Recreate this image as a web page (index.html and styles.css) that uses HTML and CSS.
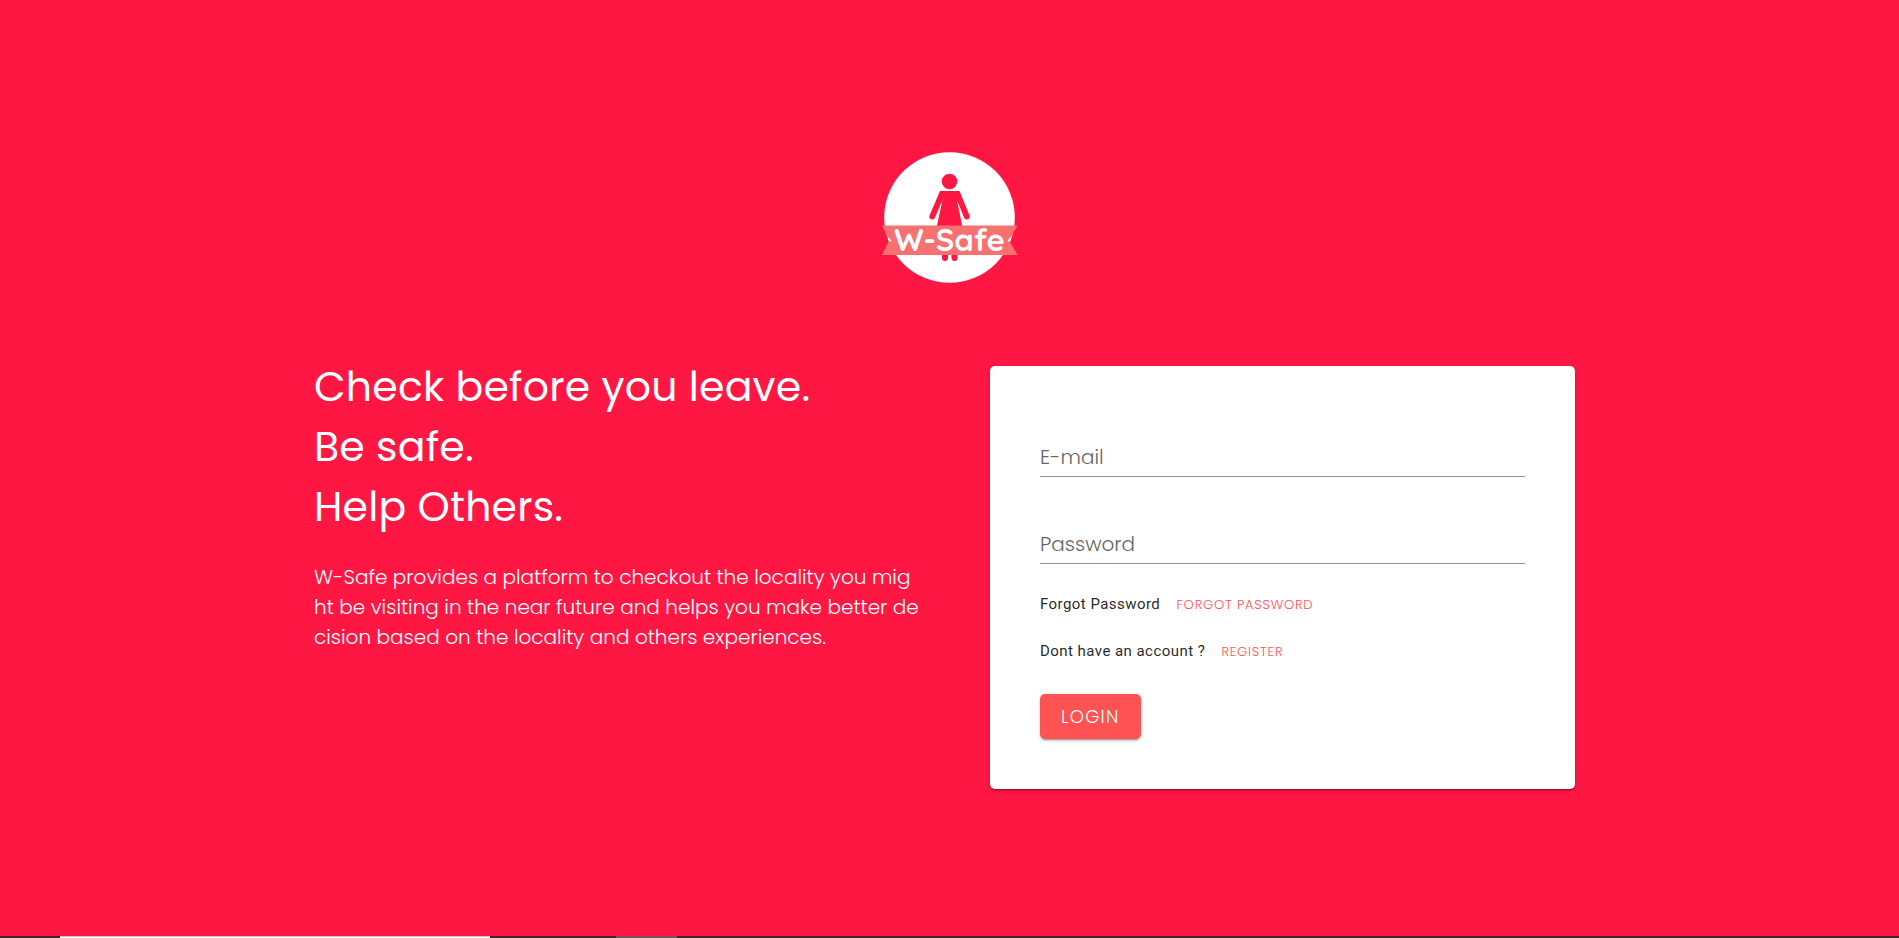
FILE: index.html
```html
<!DOCTYPE html>
<html lang="en">
<head>
<meta charset="utf-8">
<meta name="viewport" content="width=device-width, initial-scale=1">
<title>W-Safe</title>
<link rel="stylesheet" href="styles.css">
</head>
<body>
<main class="page">
  <svg class="logo" viewBox="0 0 136 132" role="img" aria-label="W-Safe">
    <circle cx="67.500" cy="65.500" r="65.300" fill="#fff"/>
    <g fill="#ff1744">
      <circle cx="67.500" cy="29.500" r="7.800"/>
      <path d="M58 39H77.500L87.500 63.500A2.900 2.900 0 0 1 82 65.500L75 48L81 78H54L60.500 48L53 65.500A2.900 2.900 0 0 1 47.500 63.500Z"/>
      <path d="M60 98H66V106A3 3 0 0 1 60 106ZM69.500 98H75.500V106A3 3 0 0 1 69.500 106Z"/>
    </g>
    <path fill="#f87171" d="M0 73.500H135.500L127 88.500L135.500 103H0L7 88.500Z"/>
    <path fill="#fff" d="M6 85L9.500 88.500L8 90L6 87.500ZM129 85L125.500 88.500L127 90L129 87.500Z"/>
    <text class="logo-text" x="67.500" y="98.500" text-anchor="middle">W-Safe</text>
  </svg>
  <div class="columns">
    <section class="intro">
      <h1 class="headline">Check before you leave.<br>Be safe.<br>Help Others.</h1>
      <p class="lead">W-Safe provides a platform to checkout the locality you mig<br>ht be visiting in the near future and helps you make better de<br>cision based on the locality and others experiences.</p>
    </section>
    <form class="card">
      <input class="field" type="email" aria-label="E-mail" placeholder="E-mail">
      <input class="field" type="password" aria-label="Password" placeholder="Password">
      <p class="hint">Forgot Password <a class="link" href="#forgot">FORGOT PASSWORD</a></p>
      <p class="hint">Dont have an account ? <a class="link" href="#register">REGISTER</a></p>
      <button class="login" type="button">LOGIN</button>
    </form>
  </div>
</main>
<footer class="strip"><div class="strip-active"></div><div class="strip-item"></div></footer>
</body>
</html>
```
FILE: styles.css
```css
* { box-sizing: border-box; }
body {
  margin: 0;
  min-height: 100vh;
  display: flex;
  flex-direction: column;
  background: #ff1744;
  color: #fff;
  font-family: Poppins, Inter, sans-serif;
  font-weight: 300;
}
.page {
  flex: 1;
  width: 100%;
  max-width: 1281px;
  margin: 0 auto;
  padding: 152px 15px 0 5px;
}
.logo {
  display: block;
  width: 136px;
  height: 132px;
  margin: 0 auto 82px;
  transform: translateX(5px);
}
.logo-text { font: 700 31px Quicksand, Poppins, sans-serif; fill: #fff; }
.columns {
  display: grid;
  grid-template-columns: 606fr 585fr;
  gap: 70px;
  align-items: start;
}
.headline {
  margin: -9px 0 25px;
  font-size: 41px;
  line-height: 60px;
  font-weight: 400;
  letter-spacing: .005em;
}
.lead {
  margin: 0;
  font-size: 20px;
  line-height: 30px;
}
.card {
  display: flex;
  flex-direction: column;
  align-items: flex-start;
  padding: 66px 50px 50px;
  border-radius: 5px;
  background: #fff;
  box-shadow: 0 3px 1px -2px rgba(0,0,0,.2), 0 2px 2px rgba(0,0,0,.14), 0 1px 5px rgba(0,0,0,.12);
}
.field {
  width: 100%;
  height: 45px;
  margin-bottom: 42px;
  padding: 5px 0 0;
  border: 0;
  border-bottom: 1px solid #949494;
  border-radius: 0;
  background: none;
  font: inherit;
  font-size: 20px;
}
.field + .field { margin-bottom: 28px; }
.field::placeholder { color: #666; opacity: 1; }
.hint {
  margin: 0 0 22px;
  color: rgba(0,0,0,.87);
  font: 400 15px/24px Roboto, sans-serif;
  letter-spacing: .03em;
}
.link {
  margin-left: 12px;
  color: #ff5252;
  font: 300 13px/24px Poppins, Inter, sans-serif;
  letter-spacing: .06em;
  text-decoration: none;
}
.login {
  height: 45px;
  margin-top: 8px;
  padding: 0 21px;
  border: 0;
  border-radius: 5px;
  background: #ff5252;
  color: #fff;
  font: inherit;
  font-size: 18px;
  letter-spacing: .07em;
  box-shadow: 0 3px 1px -2px rgba(0,0,0,.2), 0 2px 2px rgba(0,0,0,.14), 0 1px 5px rgba(0,0,0,.12);
}
.strip {
  display: flex;
  height: 2px;
  padding-left: 60px;
  gap: 126px;
  background: #4b202c;
}
.strip-active { width: 430px; background: #fff; border-top: 1px solid #c4c4c4; }
.strip-item { width: 61px; background: #7c4f59; }
```
